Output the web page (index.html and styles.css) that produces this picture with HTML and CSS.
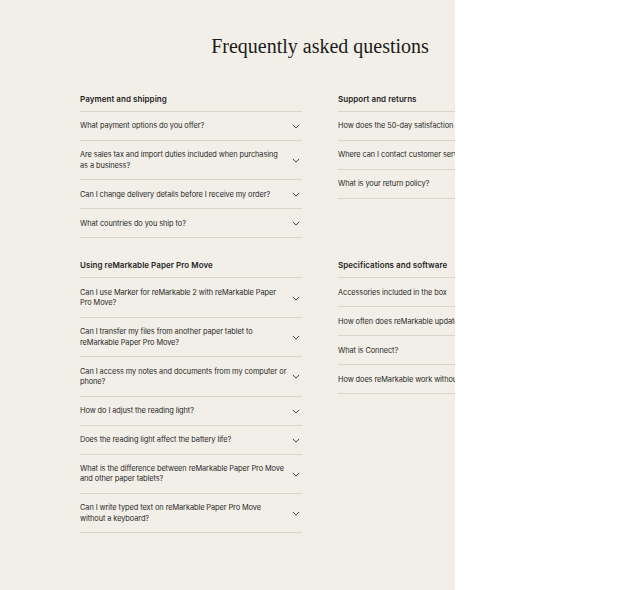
FILE: index.html
```html
<!DOCTYPE html>
<html lang="en">
<head>
<meta charset="utf-8">
<title>Frequently asked questions</title>
<link rel="stylesheet" href="styles.css">
</head>
<body>
<main class="faq">
  <div class="faq-inner">
    <h1 class="faq-title">Frequently asked questions</h1>
    <div class="faq-grid">
      <section class="faq-group">
        <h2 class="faq-heading">Payment and shipping</h2>
        <ul class="faq-list">
          <li class="faq-item"><span class="faq-q">What payment options do you offer?</span><svg class="chev" viewBox="0 0 10 6"><path d="M1 1l4 4 4-4"/></svg></li>
          <li class="faq-item"><span class="faq-q">Are sales tax and import duties included when purchasing as a business?</span><svg class="chev" viewBox="0 0 10 6"><path d="M1 1l4 4 4-4"/></svg></li>
          <li class="faq-item"><span class="faq-q">Can I change delivery details before I receive my order?</span><svg class="chev" viewBox="0 0 10 6"><path d="M1 1l4 4 4-4"/></svg></li>
          <li class="faq-item"><span class="faq-q">What countries do you ship to?</span><svg class="chev" viewBox="0 0 10 6"><path d="M1 1l4 4 4-4"/></svg></li>
        </ul>
      </section>
      <section class="faq-group">
        <h2 class="faq-heading">Support and returns</h2>
        <ul class="faq-list">
          <li class="faq-item"><span class="faq-q">How does the 50-day satisfaction guarantee work?</span><svg class="chev" viewBox="0 0 10 6"><path d="M1 1l4 4 4-4"/></svg></li>
          <li class="faq-item"><span class="faq-q">Where can I contact customer service?</span><svg class="chev" viewBox="0 0 10 6"><path d="M1 1l4 4 4-4"/></svg></li>
          <li class="faq-item"><span class="faq-q">What is your return policy?</span><svg class="chev" viewBox="0 0 10 6"><path d="M1 1l4 4 4-4"/></svg></li>
        </ul>
      </section>
      <section class="faq-group">
        <h2 class="faq-heading">Using reMarkable Paper Pro Move</h2>
        <ul class="faq-list">
          <li class="faq-item"><span class="faq-q">Can I use Marker for reMarkable 2 with reMarkable Paper Pro Move?</span><svg class="chev" viewBox="0 0 10 6"><path d="M1 1l4 4 4-4"/></svg></li>
          <li class="faq-item"><span class="faq-q">Can I transfer my files from another paper tablet to reMarkable Paper Pro Move?</span><svg class="chev" viewBox="0 0 10 6"><path d="M1 1l4 4 4-4"/></svg></li>
          <li class="faq-item"><span class="faq-q">Can I access my notes and documents from my computer or phone?</span><svg class="chev" viewBox="0 0 10 6"><path d="M1 1l4 4 4-4"/></svg></li>
          <li class="faq-item"><span class="faq-q">How do I adjust the reading light?</span><svg class="chev" viewBox="0 0 10 6"><path d="M1 1l4 4 4-4"/></svg></li>
          <li class="faq-item"><span class="faq-q">Does the reading light affect the battery life?</span><svg class="chev" viewBox="0 0 10 6"><path d="M1 1l4 4 4-4"/></svg></li>
          <li class="faq-item"><span class="faq-q">What is the difference between reMarkable Paper Pro Move and other paper tablets?</span><svg class="chev" viewBox="0 0 10 6"><path d="M1 1l4 4 4-4"/></svg></li>
          <li class="faq-item"><span class="faq-q">Can I write typed text on reMarkable Paper Pro Move without a keyboard?</span><svg class="chev" viewBox="0 0 10 6"><path d="M1 1l4 4 4-4"/></svg></li>
        </ul>
      </section>
      <section class="faq-group">
        <h2 class="faq-heading">Specifications and software</h2>
        <ul class="faq-list">
          <li class="faq-item"><span class="faq-q">Accessories included in the box</span><svg class="chev" viewBox="0 0 10 6"><path d="M1 1l4 4 4-4"/></svg></li>
          <li class="faq-item"><span class="faq-q">How often does reMarkable update its software?</span><svg class="chev" viewBox="0 0 10 6"><path d="M1 1l4 4 4-4"/></svg></li>
          <li class="faq-item"><span class="faq-q">What is Connect?</span><svg class="chev" viewBox="0 0 10 6"><path d="M1 1l4 4 4-4"/></svg></li>
          <li class="faq-item"><span class="faq-q">How does reMarkable work without Connect?</span><svg class="chev" viewBox="0 0 10 6"><path d="M1 1l4 4 4-4"/></svg></li>
        </ul>
      </section>
    </div>
  </div>
</main>
</body>
</html>
```

FILE: styles.css
```css
html, body {
  margin: 0;
  padding: 0;
  background: #ffffff;
}

/* the beige panel is narrower than the layout inside it and clips the right column */
.faq {
  width: 455px;
  min-height: 590px;
  overflow: hidden;
  background: #f2efe9;
  color: #222222;
  font-family: Inter, "Liberation Sans", sans-serif;
}

.faq-inner {
  width: 640px;
  box-sizing: border-box;
  padding: 34px 80px 40px;
}

.faq-title {
  margin: 0 0 35px;
  text-align: center;
  font-family: "Liberation Serif", "DejaVu Serif", serif;
  font-weight: 400;
  font-size: 20px;
  line-height: 24px;
  color: #1c1b19;
}

.faq-grid {
  display: grid;
  grid-template-columns: 222px 222px;
  column-gap: 36px;
  row-gap: 21px;
  align-items: start;
}

.faq-heading {
  margin: 0 0 6px;
  font-size: 8px;
  line-height: 12px;
  font-weight: 600;
  letter-spacing: 0.05px;
  color: #1f1e1c;
}

.faq-list {
  list-style: none;
  margin: 0;
  padding: 0;
  border-top: 1px solid #d9d5cd;
}

.faq-item {
  display: flex;
  align-items: center;
  justify-content: space-between;
  gap: 4px;
  padding: 9.3px 2px 8.3px 0;
  border-bottom: 1px solid #d9d5cd;
  font-size: 7.4px;
  line-height: 10.4px;
  letter-spacing: -0.08px;
  color: #2a2826;
}

.faq-q {
  flex: 1;
  max-width: 207px;
}

.chev {
  flex: none;
  width: 8px;
  height: 5px;
  fill: none;
  stroke: #3a3835;
  stroke-width: 1.2;
}
```
